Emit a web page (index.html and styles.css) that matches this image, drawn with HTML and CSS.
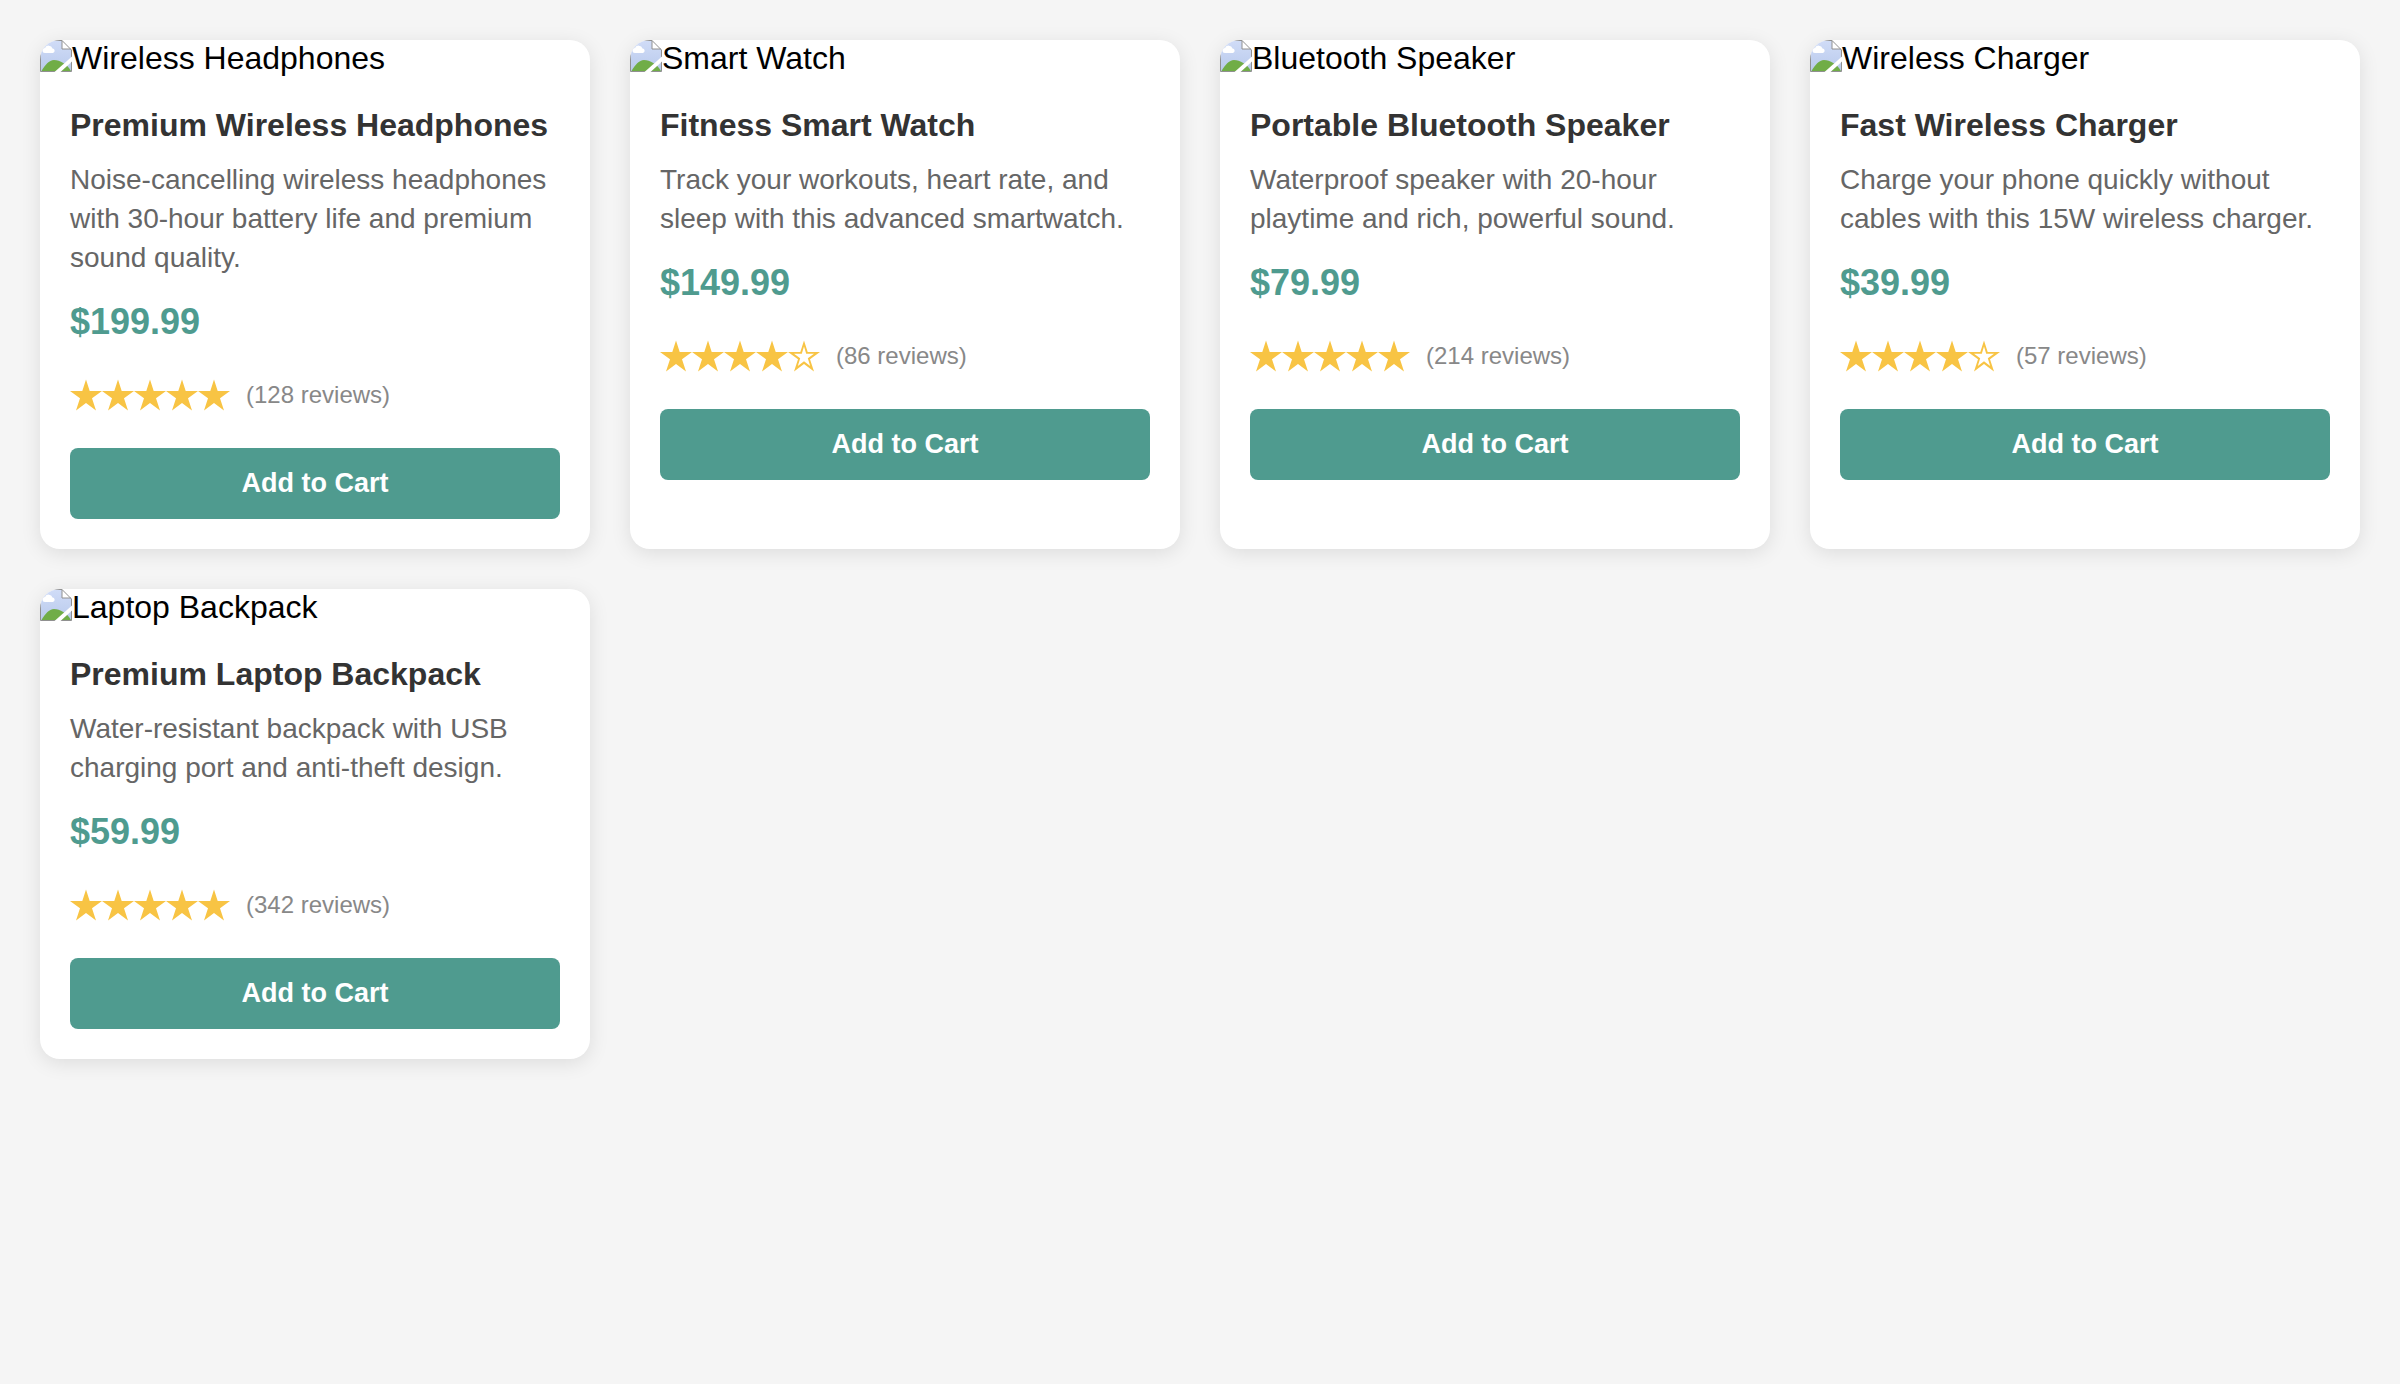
FILE: index.html
```
<!DOCTYPE html>
<html lang="en">
<head>
<meta charset="utf-8">
<meta name="viewport" content="width=device-width, initial-scale=1">
<title>Products</title>
<link rel="stylesheet" href="styles.css">
</head>
<body>
<svg class="defs" width="0" height="0" aria-hidden="true">
  <defs>
    <linearGradient id="sky" x1="0" y1="0" x2="0" y2="1">
      <stop offset="0" stop-color="#d0dcf7"/>
      <stop offset="1" stop-color="#b9caec"/>
    </linearGradient>
    <symbol id="photo" viewBox="0 0 32 32">
      <path d="M.5 .5H22L31.500 10V31.500H.5Z" fill="url(#sky)"/>
      <path d="M1.500 31C5 25 9 20 14 20C20 20 27 24 31 31Z" fill="#70ad47"/>
      <path d="M5 13a2.500 2.500 0 0 1 0-5a4 4 0 0 1 7.500 .5a2.300 2.300 0 0 1 .5 4.500Z" fill="#fff"/>
      <path d="M22 .5V9H31.500Z" fill="#fff"/>
      <path d="M22 .5V9H31" fill="none" stroke="#909090"/>
      <path d="M.5 .5H22L31.500 10V31.500H.5Z" fill="none" stroke="#909090"/>
      <path d="M14.500 32L32 16.500V21.500L20.500 32Z" fill="#fff"/>
    </symbol>
    <symbol id="star" viewBox="0 0 32 32">
      <path d="M16 .5L19.700 12H32L22 19.200L26 31.500L16 24L6 31.500L10 19.200L0 12H12.300Z" fill="currentColor"/>
    </symbol>
    <symbol id="star-empty" viewBox="0 0 32 32">
      <path fill-rule="evenodd" d="M16 .5L19.700 12H32L22 19.200L26 31.500L16 24L6 31.500L10 19.200L0 12H12.300ZM16 6.500L13.800 13.700H6L12.200 18.300L9.800 26L16 21.300L22.200 26L19.800 18.300L26 13.700H18.200Z" fill="currentColor"/>
    </symbol>
  </defs>
</svg>
<main class="product-grid">
  <article class="product-card">
    <div class="product-image"><svg class="photo-icon" aria-hidden="true"><use href="#photo"/></svg><span>Wireless Headphones</span></div>
    <div class="product-info">
      <h2 class="product-title">Premium Wireless Headphones</h2>
      <p class="product-description">Noise-cancelling wireless headphones with 30-hour battery life and premium sound quality.</p>
      <p class="product-price">$199.99</p>
      <div class="product-rating">
        <span class="stars" role="img" aria-label="5 out of 5 stars"><svg><use href="#star"/></svg><svg><use href="#star"/></svg><svg><use href="#star"/></svg><svg><use href="#star"/></svg><svg><use href="#star"/></svg></span>
        <span class="review-count">(128 reviews)</span>
      </div>
      <button class="add-to-cart" type="button">Add to Cart</button>
    </div>
  </article>
  <article class="product-card">
    <div class="product-image"><svg class="photo-icon" aria-hidden="true"><use href="#photo"/></svg><span>Smart Watch</span></div>
    <div class="product-info">
      <h2 class="product-title">Fitness Smart Watch</h2>
      <p class="product-description">Track your workouts, heart rate, and sleep with this advanced smartwatch.</p>
      <p class="product-price">$149.99</p>
      <div class="product-rating">
        <span class="stars" role="img" aria-label="4 out of 5 stars"><svg><use href="#star"/></svg><svg><use href="#star"/></svg><svg><use href="#star"/></svg><svg><use href="#star"/></svg><svg><use href="#star-empty"/></svg></span>
        <span class="review-count">(86 reviews)</span>
      </div>
      <button class="add-to-cart" type="button">Add to Cart</button>
    </div>
  </article>
  <article class="product-card">
    <div class="product-image"><svg class="photo-icon" aria-hidden="true"><use href="#photo"/></svg><span>Bluetooth Speaker</span></div>
    <div class="product-info">
      <h2 class="product-title">Portable Bluetooth Speaker</h2>
      <p class="product-description">Waterproof speaker with 20-hour playtime and rich, powerful sound.</p>
      <p class="product-price">$79.99</p>
      <div class="product-rating">
        <span class="stars" role="img" aria-label="5 out of 5 stars"><svg><use href="#star"/></svg><svg><use href="#star"/></svg><svg><use href="#star"/></svg><svg><use href="#star"/></svg><svg><use href="#star"/></svg></span>
        <span class="review-count">(214 reviews)</span>
      </div>
      <button class="add-to-cart" type="button">Add to Cart</button>
    </div>
  </article>
  <article class="product-card">
    <div class="product-image"><svg class="photo-icon" aria-hidden="true"><use href="#photo"/></svg><span>Wireless Charger</span></div>
    <div class="product-info">
      <h2 class="product-title">Fast Wireless Charger</h2>
      <p class="product-description">Charge your phone quickly without cables with this 15W wireless charger.</p>
      <p class="product-price">$39.99</p>
      <div class="product-rating">
        <span class="stars" role="img" aria-label="4 out of 5 stars"><svg><use href="#star"/></svg><svg><use href="#star"/></svg><svg><use href="#star"/></svg><svg><use href="#star"/></svg><svg><use href="#star-empty"/></svg></span>
        <span class="review-count">(57 reviews)</span>
      </div>
      <button class="add-to-cart" type="button">Add to Cart</button>
    </div>
  </article>
  <article class="product-card">
    <div class="product-image"><svg class="photo-icon" aria-hidden="true"><use href="#photo"/></svg><span>Laptop Backpack</span></div>
    <div class="product-info">
      <h2 class="product-title">Premium Laptop Backpack</h2>
      <p class="product-description">Water-resistant backpack with USB charging port and anti-theft design.</p>
      <p class="product-price">$59.99</p>
      <div class="product-rating">
        <span class="stars" role="img" aria-label="5 out of 5 stars"><svg><use href="#star"/></svg><svg><use href="#star"/></svg><svg><use href="#star"/></svg><svg><use href="#star"/></svg><svg><use href="#star"/></svg></span>
        <span class="review-count">(342 reviews)</span>
      </div>
      <button class="add-to-cart" type="button">Add to Cart</button>
    </div>
  </article>
</main>
</body>
</html>
```
FILE: styles.css
```
* {
  box-sizing: border-box;
  margin: 0;
  padding: 0;
}

body {
  padding: 40px;
  background: #f5f5f5;
  color: #000;
  font-family: "Liberation Sans", Arial, sans-serif;
  font-size: 32px;
  line-height: 37px;
}

.defs {
  position: absolute;
}

.product-grid {
  display: grid;
  grid-template-columns: repeat(auto-fill, minmax(500px, 1fr));
  gap: 40px;
}

.product-card {
  overflow: hidden;
  border-radius: 20px;
  background: #fff;
  box-shadow: 0 4px 20px rgba(0, 0, 0, 0.1);
}

.product-image {
  display: flex;
  align-items: flex-start;
}

.photo-icon {
  flex: none;
  width: 32px;
  height: 32px;
}

.product-info {
  padding: 30px;
}

.product-title {
  margin-bottom: 16px;
  color: #333;
  font-size: 32px;
  font-weight: bold;
}

.product-description {
  margin-bottom: 24px;
  color: #666;
  font-size: 28px;
  line-height: 39px;
}

.product-price {
  margin-bottom: 36px;
  color: #4f9b8f;
  font-size: 36px;
  font-weight: bold;
  line-height: 42px;
}

.product-rating {
  display: flex;
  align-items: center;
  gap: 16px;
  height: 32px;
  margin-bottom: 37px;
}

.stars {
  display: flex;
  color: #f8c444;
}

.stars svg {
  width: 32px;
  height: 32px;
}

.review-count {
  color: #888;
  font-size: 24px;
  line-height: 28px;
}

.add-to-cart {
  display: block;
  width: 100%;
  padding: 20px;
  border: 0;
  border-radius: 8px;
  background: #4f9b8f;
  color: #fff;
  font-family: inherit;
  font-size: 27px;
  font-weight: bold;
  line-height: 31px;
  cursor: pointer;
}
```
